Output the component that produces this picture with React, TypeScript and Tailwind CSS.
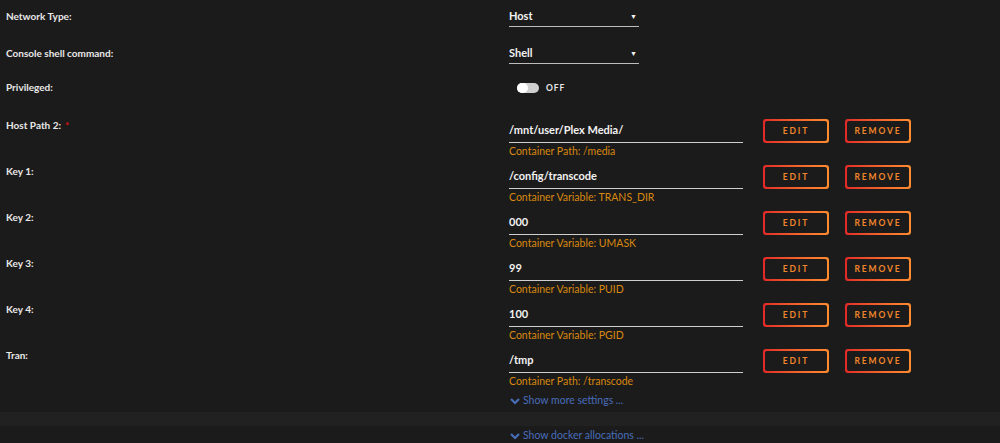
import React from 'react'

const font = { fontFamily: 'Lato, "Open Sans", "Liberation Sans", sans-serif' }

function GradButton({ label, width }: { label: string; width: string }) {
  return (
    <div className={`${width} h-[24px] rounded-[3px] bg-gradient-to-r from-[#e22828] to-[#ff8c2f] p-[2px]`}>
      <div className="flex h-full w-full items-center justify-center rounded-[2px] bg-[#1c1b1b] text-[8.5px] font-bold tracking-[0.22em] text-[#f0862c]">
        {label}
      </div>
    </div>
  )
}

function Select({ value }: { value: string }) {
  return (
    <div className="flex h-[20px] w-[130px] items-center justify-between border-b border-[#bdbdbd] pb-[1px] text-[11px] font-bold text-[#f2f2f2]">
      <span>{value}</span>
      <span className="mr-[2px] text-[7px]">▼</span>
    </div>
  )
}

function PathRow({ label, value, caption, required }: { label: string; value: string; caption: string; required?: boolean }) {
  return (
    <div className="flex h-[46px]">
      <div className="w-[509px] pl-[6px] pt-[9px] text-[10px] font-bold leading-[14px] text-[#e8e8e8]">
        {label}
        {required && <span className="ml-[4px] text-[#d11]">*</span>}
      </div>
      <div className="flex">
        <div className="w-[234px] pt-[13px]">
          <div className="h-[21px] border-b border-[#cfcfcf] text-[11px] font-bold leading-[16px] text-[#f2f2f2]">{value}</div>
          <div className="mt-[2px] text-[10.5px] leading-[13px] text-[#d8880f]">{caption}</div>
        </div>
        <div className="ml-[20px] mt-[10px] flex gap-[16px]">
          <GradButton label="EDIT" width="w-[66px]" />
          <GradButton label="REMOVE" width="w-[66px]" />
        </div>
      </div>
    </div>
  )
}

function Chevron() {
  return (
    <svg width="10" height="8" viewBox="0 0 10 8">
      <path d="M1 2 L5 6 L9 2" fill="none" stroke="#486dba" strokeWidth="2.2" />
    </svg>
  )
}

export default function App() {
  const paths = [
    { label: 'Host Path 2:', value: '/mnt/user/Plex Media/', caption: 'Container Path: /media', required: true },
    { label: 'Key 1:', value: '/config/transcode', caption: 'Container Variable: TRANS_DIR' },
    { label: 'Key 2:', value: '000', caption: 'Container Variable: UMASK' },
    { label: 'Key 3:', value: '99', caption: 'Container Variable: PUID' },
    { label: 'Key 4:', value: '100', caption: 'Container Variable: PGID' },
    { label: 'Tran:', value: '/tmp', caption: 'Container Path: /transcode' },
  ]

  return (
    <div className="h-[443px] w-full overflow-hidden bg-[#1c1b1b]" style={font}>
      {/* Network type */}
      <div className="flex h-[37px]">
        <div className="w-[509px] pl-[6px] pt-[9px] text-[10px] font-bold leading-[14px] text-[#e8e8e8]">Network Type:</div>
        <div className="pt-[7px]">
          <Select value="Host" />
        </div>
      </div>

      {/* Console */}
      <div className="flex h-[34px]">
        <div className="w-[509px] pl-[6px] pt-[9px] text-[10px] font-bold leading-[14px] text-[#e8e8e8]">Console shell command:</div>
        <div className="pt-[7px]">
          <Select value="Shell" />
        </div>
      </div>

      {/* Privileged */}
      <div className="flex h-[38px]">
        <div className="w-[509px] pl-[6px] pt-[9px] text-[10px] font-bold leading-[14px] text-[#e8e8e8]">Privileged:</div>
        <div className="flex items-center self-start pl-[8px] pt-[11px]">
          <div className="flex h-[10px] w-[22px] items-center rounded-full bg-[#cfcfcf]">
            <div className="h-[10px] w-[11px] rounded-full bg-white" />
          </div>
          <span className="ml-[7px] text-[8.5px] font-bold tracking-[0.1em] text-[#e8e8e8]">OFF</span>
        </div>
      </div>

      {paths.map((p) => (
        <PathRow key={p.label} {...p} />
      ))}

      {/* Show more settings */}
      <div className="flex h-[27px] items-center pl-[510px]">
        <span className="flex items-center gap-[3px] pt-[5px] text-[10.5px] text-[#486dba]">
          <Chevron />
          Show more settings ...
        </span>
      </div>
      <div className="h-[14px] bg-[#212121]" />
      <div className="flex h-[17px] items-center pl-[510px]">
        <span className="flex items-center gap-[3px] pt-[3px] text-[10.5px] text-[#486dba]">
          <Chevron />
          Show docker allocations ...
        </span>
      </div>
    </div>
  )
}
